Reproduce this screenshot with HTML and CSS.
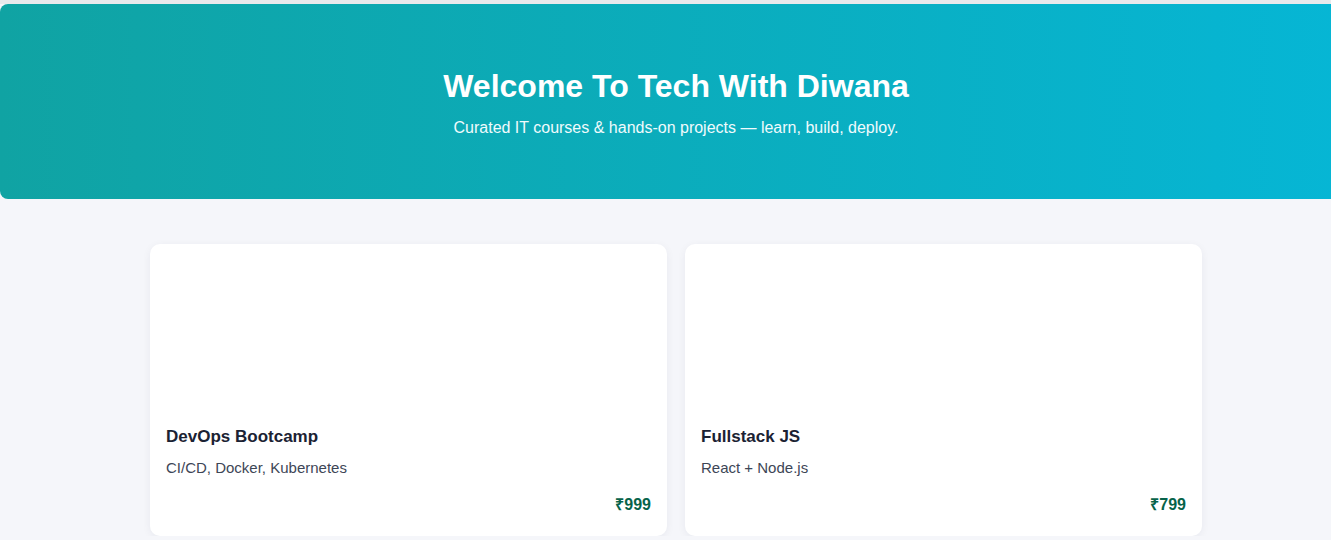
FILE: index.html
```html
<!DOCTYPE html>
<html lang="en">
<head>
<meta charset="utf-8">
<title>Tech With Diwana</title>
<link rel="stylesheet" href="styles.css">
</head>
<body>
<div class="page">
  <header class="hero">
    <h1 class="hero-title">Welcome To Tech With Diwana</h1>
    <p class="hero-sub">Curated IT courses &amp; hands-on projects — learn, build, deploy.</p>
  </header>
  <main class="grid">
    <article class="card">
      <div class="card-media"></div>
      <h3 class="card-title">DevOps Bootcamp</h3>
      <p class="card-desc">CI/CD, Docker, Kubernetes</p>
      <div class="card-price">₹999</div>
    </article>
    <article class="card">
      <div class="card-media"></div>
      <h3 class="card-title">Fullstack JS</h3>
      <p class="card-desc">React + Node.js</p>
      <div class="card-price">₹799</div>
    </article>
  </main>
</div>
</body>
</html>
```

FILE: styles.css
```css
html, body {
  margin: 0;
  padding: 0;
}
body {
  background: #f5f6fa;
  font-family: "Liberation Sans", Arial, sans-serif;
  overflow-x: hidden;
  border-top: 4px solid #e9e9ec;
}
.page {
  width: 1352px;
}
.hero {
  background: linear-gradient(90deg, #10a3a3, #06b6d5);
  color: #fff;
  border-radius: 8px;
  height: 195px;
  box-sizing: border-box;
  padding-top: 64px;
  text-align: center;
}
.hero-title {
  margin: 0;
  font-size: 32px;
  font-weight: 700;
  line-height: 37px;
}
.hero-sub {
  margin: 14px 0 0;
  font-size: 16px;
  line-height: 18px;
  color: #f0fbfd;
}
.grid {
  max-width: 1100px;
  margin: 45px auto 0;
  padding: 0 24px;
  box-sizing: border-box;
  display: grid;
  grid-template-columns: 1fr 1fr;
  gap: 18px;
}
.card {
  background: #fff;
  border-radius: 10px;
  box-shadow: 0 2px 8px rgba(20, 30, 60, 0.06);
  padding: 16px;
  height: 292px;
  box-sizing: border-box;
  display: flex;
  flex-direction: column;
}
.card-media {
  height: 167px;
}
.card-title {
  margin: 0;
  font-size: 17px;
  font-weight: 700;
  line-height: 20px;
  color: #1b2233;
}
.card-desc {
  margin: 12px 0 0;
  font-size: 15px;
  line-height: 18px;
  color: #3d4656;
}
.card-price {
  margin-top: 18px;
  text-align: right;
  font-size: 16px;
  font-weight: 700;
  line-height: 19px;
  color: #07634a;
}
```
